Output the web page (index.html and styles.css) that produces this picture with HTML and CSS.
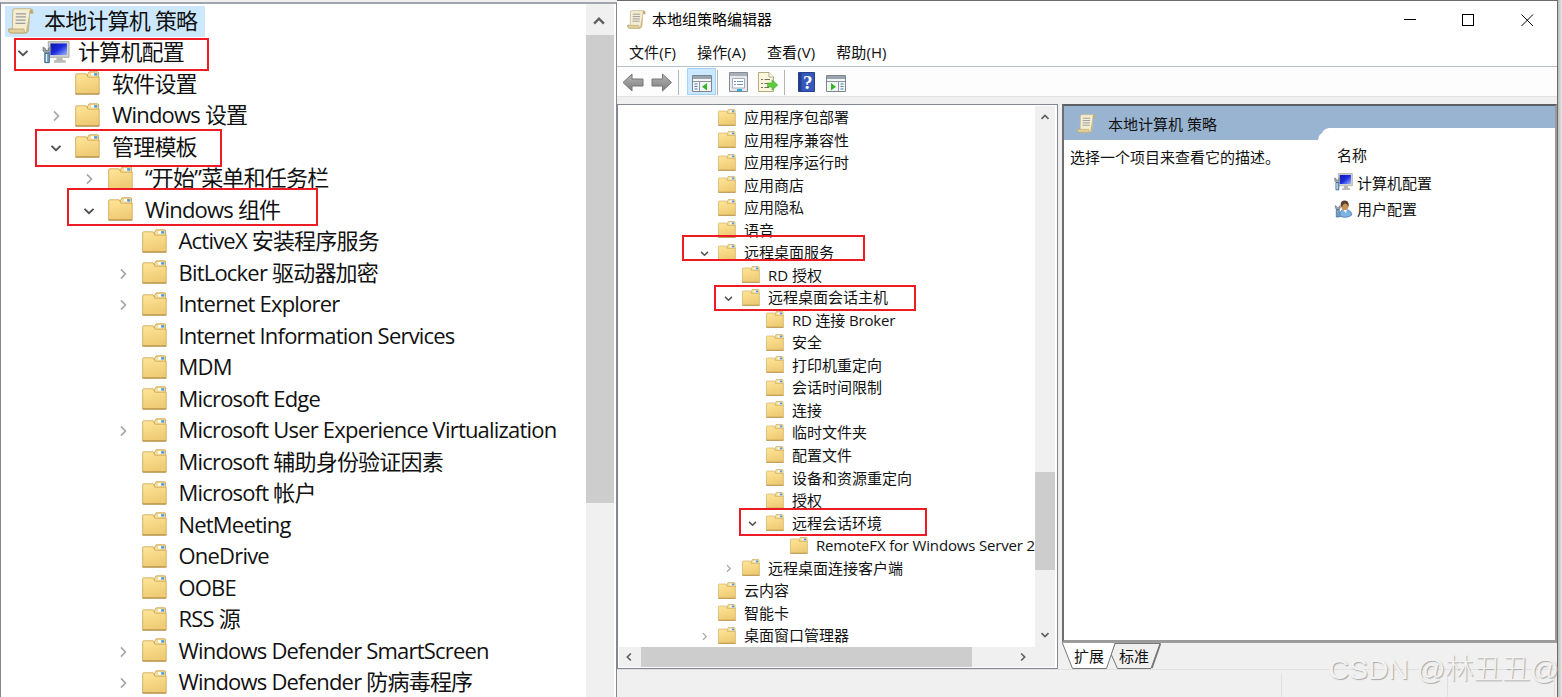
FILE: index.html
```
<!DOCTYPE html>
<html lang="zh-CN">

<head>
    <meta charset="UTF-8">
    <meta name="viewport" content="width=device-width, initial-scale=1.0">
    <title>本地组策略编辑器</title>
    <link rel="stylesheet" href="styles.css">
</head>

<body>
    <svg class="defs" width="0" height="0">
        <defs>
            <linearGradient id="fold" x1="0" y1="0" x2="0.3" y2="1">
                <stop offset="0" stop-color="#ffe69a" />
                <stop offset="1" stop-color="#efcb74" />
            </linearGradient>
            <linearGradient id="blue" x1="0" y1="0" x2="1" y2="1">
                <stop offset="0" stop-color="#0a14a8" />
                <stop offset="0.5" stop-color="#1c2be0" />
                <stop offset="1" stop-color="#9db8ff" />
            </linearGradient>
            <linearGradient id="grey" x1="0" y1="0" x2="0" y2="1">
                <stop offset="0" stop-color="#b5b5b5" />
                <stop offset="1" stop-color="#7e7e7e" />
            </linearGradient>
        </defs>
        <symbol id="folder" viewBox="0 0 18 17" preserveAspectRatio="none">
            <path d="M9 2.5 L10.2 .6 H16.4 Q17 .6 17 1.3 V6 H9z" fill="#f6dc94" stroke="#c9a658" stroke-width=".7" />
            <path d="M.5 2.7 Q.5 2 1.2 2 H8 L9.3 4.4 H17.4 V16.3 H.5z" fill="url(#fold)" stroke="#d3b064" stroke-width=".7" />
            <path d="M11.6 1.5 h4.4 v1.8 h-4.4z" fill="#fff" />
            <path d="M13.8 1.5 h2.2 v1.8 h-2.2z" fill="#4a9be0" />
            <path d="M.4 16.3 H17.5" stroke="#b6924c" stroke-width=".9" />
        </symbol>
        <symbol id="scroll" viewBox="0 0 18 18">
            <path d="M3.3 1.2 Q4 .6 5 .6 H15.5 Q17.4 .8 17.3 3.6 H15 L14.2 15 Q14 17.2 12 17.3 H2 Q.4 17 .5 14.5 H3z" fill="#f5edcf" stroke="#c4b78f" stroke-width=".7" />
            <path d="M14.8 3.5 Q14.6 1.6 15.7 .8 Q17.5 1 17.3 3.6z" fill="#bda871" />
            <path d="M15 3.6 L14.2 15 Q14 17 12.4 17.3 L13 13z" fill="#c9b988" />
            <path d="M.5 14.6 H11 Q11 16.6 12.4 17.3 H2 Q.5 17 .5 14.6z" fill="#e3d19a" stroke="#b8a572" stroke-width=".6" />
            <path d="M5.5 4 H12.5 M5.4 6.2 H12.4 M5.3 8.4 H12.2 M5.2 10.6 H12" stroke="#9b9ba4" stroke-width=".9" />
        </symbol>
        <symbol id="computer" viewBox="0 0 20 17" preserveAspectRatio="none">
            <path d="M4.5 .5 H19.3 V12 H4.5z" fill="#d5d5cf" stroke="#a5a5a0" stroke-width=".7" />
            <path d="M6 1.8 H17.8 V10.4 H6z" fill="url(#blue)" />
            <path d="M10.5 12 H14.5 L15 14.3 H17 V16 H8.5 V14.3 H10.2z" fill="#b9b9b5" />
            <path d="M.8 4.5 V7.4 L2.4 9 H4.6 L6.2 7.4 V4.5 L4.6 5.6 V7 H2.4 V5.6z" fill="#a2a8ae" stroke="#666f78" stroke-width=".6" />
            <path d="M2 9 H5.2 V16 H2z" fill="#77a5cf" stroke="#39617f" stroke-width=".7" />
            <path d="M3.2 9.6 V15.4" stroke="#e8f4ff" stroke-width=".8" />
        </symbol>
        <symbol id="user" viewBox="0 0 18 18">
            <path d="M5.5 16.5 Q5 9.5 10 9.3 Q16.6 9.5 17.3 15 Q15 17.4 10 17.3z" fill="#7db4e2" stroke="#3c6d9d" stroke-width=".7" />
            <path d="M8.6 9.5 L11 13 L13 9.6z" fill="#f2f7fb" />
            <ellipse cx="10.3" cy="5.6" rx="3.7" ry="4.5" fill="#c88f57" />
            <path d="M6.3 6 Q5.5 .6 10.5 .6 Q15 1 14 7 Q13.4 4 11 3.4 Q8 3.6 7.8 7z" fill="#58402c" />
            <path d="M.8 5.5 V8 L2.2 9.5 H4.4 L5.8 8 V5.5 L4.4 6.5 V7.8 H2.2 V6.5z" fill="#a2a8ae" stroke="#666f78" stroke-width=".6" />
            <path d="M1.8 9.5 H4.8 V17 H1.8z" fill="#77a5cf" stroke="#39617f" stroke-width=".7" />
        </symbol>
        <symbol id="open" viewBox="0 0 10 10">
            <path d="M1.2 3.2 L5 6.9 L8.8 3.2" fill="none" stroke="#505050" stroke-width="1.6" />
        </symbol>
        <symbol id="closed" viewBox="0 0 10 10">
            <path d="M3.3 1.2 L7 5 L3.3 8.8" fill="none" stroke="#a6a6a6" stroke-width="1.4" />
        </symbol>
        <symbol id="chev" viewBox="0 0 12 12">
            <path d="M1.8 8.2 L6 4 L10.2 8.2" fill="none" stroke="#606060" stroke-width="2" />
        </symbol>
    </svg>

    <div class="container">
        <div class="left">
            <ul class="tree big">
                <li class="root"><span class="selected"><svg class="icon"><use href="#scroll" /></svg>本地计算机 策略</span></li>
                <li class="l1"><svg class="arrow"><use href="#open" /></svg><svg class="icon pc"><use href="#computer" /></svg>计算机配置</li>
                <li class="l2"><svg class="arrow"></svg><svg class="icon"><use href="#folder" /></svg>软件设置</li>
                <li class="l2"><svg class="arrow"><use href="#closed" /></svg><svg class="icon"><use href="#folder" /></svg>Windows 设置</li>
                <li class="l2"><svg class="arrow"><use href="#open" /></svg><svg class="icon"><use href="#folder" /></svg>管理模板</li>
                <li class="l3"><svg class="arrow"><use href="#closed" /></svg><svg class="icon"><use href="#folder" /></svg>“开始”菜单和任务栏</li>
                <li class="l3"><svg class="arrow"><use href="#open" /></svg><svg class="icon"><use href="#folder" /></svg>Windows 组件</li>
                <li class="l4"><svg class="arrow"></svg><svg class="icon"><use href="#folder" /></svg>ActiveX 安装程序服务</li>
                <li class="l4"><svg class="arrow"><use href="#closed" /></svg><svg class="icon"><use href="#folder" /></svg>BitLocker 驱动器加密</li>
                <li class="l4"><svg class="arrow"><use href="#closed" /></svg><svg class="icon"><use href="#folder" /></svg>Internet Explorer</li>
                <li class="l4"><svg class="arrow"></svg><svg class="icon"><use href="#folder" /></svg>Internet Information Services</li>
                <li class="l4"><svg class="arrow"></svg><svg class="icon"><use href="#folder" /></svg>MDM</li>
                <li class="l4"><svg class="arrow"></svg><svg class="icon"><use href="#folder" /></svg>Microsoft Edge</li>
                <li class="l4"><svg class="arrow"><use href="#closed" /></svg><svg class="icon"><use href="#folder" /></svg>Microsoft User Experience Virtualization</li>
                <li class="l4"><svg class="arrow"></svg><svg class="icon"><use href="#folder" /></svg>Microsoft 辅助身份验证因素</li>
                <li class="l4"><svg class="arrow"></svg><svg class="icon"><use href="#folder" /></svg>Microsoft 帐户</li>
                <li class="l4"><svg class="arrow"></svg><svg class="icon"><use href="#folder" /></svg>NetMeeting</li>
                <li class="l4"><svg class="arrow"></svg><svg class="icon"><use href="#folder" /></svg>OneDrive</li>
                <li class="l4"><svg class="arrow"></svg><svg class="icon"><use href="#folder" /></svg>OOBE</li>
                <li class="l4"><svg class="arrow"></svg><svg class="icon"><use href="#folder" /></svg>RSS 源</li>
                <li class="l4"><svg class="arrow"><use href="#closed" /></svg><svg class="icon"><use href="#folder" /></svg>Windows Defender SmartScreen</li>
                <li class="l4"><svg class="arrow"><use href="#closed" /></svg><svg class="icon"><use href="#folder" /></svg>Windows Defender 防病毒程序</li>
            </ul>
            <div class="bar-big">
                <svg class="chev"><use href="#chev" /></svg>
                <div class="thumb"></div>
            </div>
            <div class="mark m1"></div>
            <div class="mark m2"></div>
            <div class="mark m3"></div>
        </div>

        <div class="window">
            <div class="titlebar">
                <svg class="icon"><use href="#scroll" /></svg>
                <span class="caption">本地组策略编辑器</span>
                <svg class="buttons" width="131" height="14" viewBox="0 0 131 14" shape-rendering="crispEdges">
                    <path d="M0 6.5 H12 M58.5 1.5 H69.5 V12.5 H58.5z" fill="none" stroke="#000" />
                    <path d="M117.5 1.5 L129 13 M129 1.5 L117.5 13" stroke="#000" shape-rendering="auto" />
                </svg>
            </div>
            <div class="menu">
                <span>文件(F)</span>
                <span>操作(A)</span>
                <span>查看(V)</span>
                <span>帮助(H)</span>
            </div>
            <div class="toolbar">
                <svg width="240" height="28" viewBox="0 0 240 28">
                    <path d="M6 14.5 L15 6 V11 H26 V18 H15 V23z" fill="url(#grey)" stroke="#777" />
                    <path d="M54.5 14.5 L45.5 6 V11 H35 V18 H45.5 V23z" fill="url(#grey)" stroke="#777" />
                    <path d="M61.5 2 V27 M100.5 2 V27 M167.5 2 V27" stroke="#b4b4b4" />
                    <path d="M70.5 .5 H98.5 V26.5 H70.5z" fill="#cce8ff" stroke="#a4d2f5" />
                    <!-- console tree -->
                    <path d="M75.5 7.5 H94.5 V23.5 H75.5z" fill="#f4f5f6" stroke="#7d8690" />
                    <path d="M76 8 H94 V11 H76z" fill="#9aa4ae" />
                    <path d="M76 13.5 H94 M82.5 14 V23" stroke="#8b949e" />
                    <path d="M77.5 16 H80.5 M77.5 18.5 H80.5 M77.5 21 H80.5" stroke="#4d7eb0" stroke-width="1.2" />
                    <path d="M90 15 V22.500 L85 18.700z" fill="#35b525" />
                    <!-- properties -->
                    <path d="M112.5 4.5 H130.5 V23.5 H112.5z" fill="#e6e9ec" stroke="#858b92" />
                    <path d="M113 5 H130 V8 H113z" fill="#aab0b7" />
                    <path d="M115.5 10.5 H127.5 V20 H115.5z" fill="#fff" stroke="#a6adb6" />
                    <path d="M117 13.5 H119 M120 13.5 H126 M117 16.5 H119 M120 16.5 H126" stroke="#6e93b9" />
                    <path d="M120 22 H125" stroke="#22aaf0" stroke-width="2" />
                    <!-- export list -->
                    <path d="M141.5 4.5 H152 L156.5 9 V23.5 H141.5z" fill="#fcf6dc" stroke="#b7ab82" />
                    <path d="M152 4.5 V9 H156.5" fill="#fff" stroke="#b7ab82" />
                    <path d="M144 11.5 H146 M147.5 11.5 H153 M144 15.5 H146 M147.5 15.5 H152 M144 19.5 H146 M147.5 19.5 H152" stroke="#70706a" />
                    <path d="M150.5 15 H155 V11.8 L160.8 17 L155 22.2 V19 H150.5z" fill="#5ccb3d" stroke="#48a82e" stroke-width=".6" />
                    <!-- help -->
                    <path d="M181.500 4.500 H197.500 V23.500 H181.500z" fill="#3658bd" stroke="#27408a" />
                    <path d="M182 5 H184.500 V23 H182z" fill="#233c94" />
                    <text x="186" y="20.5" class="question">?</text>
                    <!-- action pane -->
                    <path d="M209.5 7.5 H228.5 V23.5 H209.5z" fill="#f4f5f6" stroke="#7d8690" />
                    <path d="M210 8 H228 V11 H210z" fill="#9aa4ae" />
                    <path d="M210 13.5 H228 M221.5 14 V23" stroke="#8b949e" />
                    <path d="M223.5 16 H226.5 M223.5 18.5 H226.5 M223.5 21 H226.5" stroke="#4d7eb0" stroke-width="1.2" />
                    <path d="M214 15 V22.5 L219 18.7z" fill="#35b525" />
                </svg>
            </div>
            <div class="content">
                <div class="console">
                    <div class="console-top">
                        <ul class="tree small">
                            <li class="l1"><svg class="arrow"></svg><svg class="icon"><use href="#folder" /></svg>应用程序包部署</li>
                            <li class="l1"><svg class="arrow"></svg><svg class="icon"><use href="#folder" /></svg>应用程序兼容性</li>
                            <li class="l1"><svg class="arrow"></svg><svg class="icon"><use href="#folder" /></svg>应用程序运行时</li>
                            <li class="l1"><svg class="arrow"></svg><svg class="icon"><use href="#folder" /></svg>应用商店</li>
                            <li class="l1"><svg class="arrow"></svg><svg class="icon"><use href="#folder" /></svg>应用隐私</li>
                            <li class="l1"><svg class="arrow"></svg><svg class="icon"><use href="#folder" /></svg>语音</li>
                            <li class="l1"><svg class="arrow"><use href="#open" /></svg><svg class="icon"><use href="#folder" /></svg>远程桌面服务</li>
                            <li class="l2"><svg class="arrow"></svg><svg class="icon"><use href="#folder" /></svg>RD 授权</li>
                            <li class="l2"><svg class="arrow"><use href="#open" /></svg><svg class="icon"><use href="#folder" /></svg>远程桌面会话主机</li>
                            <li class="l3"><svg class="arrow"></svg><svg class="icon"><use href="#folder" /></svg><span class="latin">RD 连接 Broker</span></li>
                            <li class="l3"><svg class="arrow"></svg><svg class="icon"><use href="#folder" /></svg>安全</li>
                            <li class="l3"><svg class="arrow"></svg><svg class="icon"><use href="#folder" /></svg>打印机重定向</li>
                            <li class="l3"><svg class="arrow"></svg><svg class="icon"><use href="#folder" /></svg>会话时间限制</li>
                            <li class="l3"><svg class="arrow"></svg><svg class="icon"><use href="#folder" /></svg>连接</li>
                            <li class="l3"><svg class="arrow"></svg><svg class="icon"><use href="#folder" /></svg>临时文件夹</li>
                            <li class="l3"><svg class="arrow"></svg><svg class="icon"><use href="#folder" /></svg>配置文件</li>
                            <li class="l3"><svg class="arrow"></svg><svg class="icon"><use href="#folder" /></svg>设备和资源重定向</li>
                            <li class="l3"><svg class="arrow"></svg><svg class="icon"><use href="#folder" /></svg>授权</li>
                            <li class="l3"><svg class="arrow"><use href="#open" /></svg><svg class="icon"><use href="#folder" /></svg>远程会话环境</li>
                            <li class="l4"><svg class="arrow"></svg><svg class="icon"><use href="#folder" /></svg><span class="latin">RemoteFX for Windows Server 2</span></li>
                            <li class="l2"><svg class="arrow"><use href="#closed" /></svg><svg class="icon"><use href="#folder" /></svg>远程桌面连接客户端</li>
                            <li class="l1"><svg class="arrow"></svg><svg class="icon"><use href="#folder" /></svg>云内容</li>
                            <li class="l1"><svg class="arrow"></svg><svg class="icon"><use href="#folder" /></svg>智能卡</li>
                            <li class="l1"><svg class="arrow"><use href="#closed" /></svg><svg class="icon"><use href="#folder" /></svg>桌面窗口管理器</li>
                        </ul>
                        <div class="bar-v">
                            <svg class="chev"><use href="#chev" /></svg>
                            <div class="thumb"></div>
                            <svg class="chev down"><use href="#chev" /></svg>
                        </div>
                    </div>
                    <div class="bar-h">
                        <svg class="chev prev"><use href="#chev" /></svg>
                        <div class="thumb"></div>
                        <svg class="chev next"><use href="#chev" /></svg>
                    </div>
                </div>

                <div class="result">
                    <div class="pane">
                        <div class="pane-head">
                            <svg class="icon"><use href="#scroll" /></svg>
                            <span>本地计算机 策略</span>
                            <svg class="curve" width="237" height="12" viewBox="0 0 237 12">
                                <path d="M0 12 Q.5 7 4 5 Q5.5 1 11 0 H237 V12z" fill="#fff" />
                            </svg>
                        </div>
                        <div class="pane-body">
                            <div class="desc">选择一个项目来查看它的描述。</div>
                            <div class="items">
                                <div class="name">名称</div>
                                <div class="item"><svg><use href="#computer" /></svg>计算机配置</div>
                                <div class="item"><svg><use href="#user" /></svg>用户配置</div>
                            </div>
                        </div>
                    </div>
                    <div class="tabs">
                        <svg class="tabshape" width="100" height="27" viewBox="0 0 100 27">
                            <path d="M53 .5 L49 11 L55.5 25.5 H89 L98 .5z" fill="#f0f0f0" stroke="#777" />
                            <path d="M90 25 L98.5 .5" stroke="#777" stroke-width="1.5" />
                            <path d="M0 -1 L10.5 25.5 H44.5 L53.5 -1z" fill="#fff" stroke="#777" />
                        </svg>
                        <span class="tab">扩展</span>
                        <span class="tab">标准</span>
                    </div>
                </div>
            </div>
            <div class="status">
                <div class="cell c1"></div>
                <div class="cell c2"></div>
                <div class="cell c3"></div>
            </div>
            <div class="mark m4"></div>
            <div class="mark m5"></div>
            <div class="mark m6"></div>
        </div>
        <div class="shadow"></div>
        <div class="watermark">CSDN @林丑丑@</div>
    </div>
</body>

</html>
```

FILE: styles.css
```
* {
    box-sizing: border-box;
}

body {
    margin: 0;
    overflow: hidden;
    color: #111;
    font-family: "Open Sans", "Noto Sans CJK SC", sans-serif;
    font-size: 15px;
}

svg {
    display: block;
    flex: none;
}

.defs {
    position: absolute;
}

.container {
    position: relative;
    display: flex;
    width: 1562px;
    height: 697px;
    overflow: hidden;
    background-color: #f0f0f0;
}

/* left tree */
.left {
    position: relative;
    display: flex;
    width: 617px;
    height: 695px;
    margin-top: 2px;
    border: 1px solid #828790;
    border-width: 2px 1px 0 1px;
    border-top-color: #a0a5ad;
    background-color: white;
}

.tree {
    list-style: none;
    margin: 0;
    padding: 0;
    flex: 1;
    white-space: nowrap;
}

.tree li {
    display: flex;
    align-items: center;
}

.big {
    padding-top: 2px;
    font-size: 22px;
    line-height: 26px;
    letter-spacing: -0.8px;
}

.big li {
    height: 31.5px;
    padding-bottom: 4px;
}

.big .arrow {
    width: 12px;
    height: 12px;
    margin-top: 4px;
    margin-right: 13px;
}

.big .icon {
    width: 25px;
    height: 24px;
    margin-right: 12px;
    margin-top: 1px;
}

.big .pc {
    width: 28px;
    height: 23px;
    margin-top: 3px;
    margin-right: 8px;
}

.big .root {
    padding-bottom: 0;
}

.big .root .icon {
    width: 26px;
    height: 26px;
    margin: 3px 10px 0 3px;
}

.selected {
    display: flex;
    align-items: center;
    width: 200px;
    height: 31px;
    margin-left: 4px;
    padding-bottom: 4px;
    background-color: #cce8ff;
}

.big .l1 {
    padding-left: 16px;
}

.big .l2 {
    padding-left: 49px;
}

.big .l3 {
    padding-left: 82px;
}

.big .l4 {
    padding-left: 115.5px;
}

.bar-big {
    width: 30px;
    border-right: 2px solid white;
    background-color: #f0f0f0;
}

.bar-big .chev {
    width: 14px;
    height: 14px;
    margin: 10px 0 7px 6px;
}

.bar-big .thumb {
    height: 468px;
    background-color: #cdcdcd;
}

/* editor window */
.window {
    position: relative;
    display: flex;
    flex-direction: column;
    width: 941px;
    border-top: 1px solid #6a6a6a;
    border-right: 1px solid #6a6a6a;
    background-color: #f0f0f0;
}

.titlebar {
    display: flex;
    align-items: center;
    height: 37px;
    padding: 0 22px 0 10px;
    background-color: white;
}

.titlebar .icon {
    width: 19px;
    height: 19px;
    margin-right: 6px;
}

.caption {
    flex: 1;
    padding-bottom: 2px;
    color: black;
}

.menu {
    display: flex;
    gap: 21px;
    height: 29px;
    padding: 2px 0 0 12px;
    line-height: 24px;
    letter-spacing: 0.1px;
    background-color: white;
    border-bottom: 1px solid #b9c1c8;
}

.toolbar {
    height: 30px;
    padding-top: 1px;
    background-color: #fdfdfd;
    border-bottom: 1px solid #e3e3e3;
}

.question {
    fill: white;
    font-family: "Liberation Serif", serif;
    font-size: 19px;
    font-weight: bold;
}

.content {
    display: flex;
    gap: 4px;
    height: 572px;
    padding-top: 7px;
}

.console {
    width: 441px;
    height: 565px;
    padding: 1px;
    border: 1px solid #828790;
    background-color: white;
}

.console-top {
    display: flex;
    height: 541px;
}

.small {
    font-size: 15px;
    line-height: 20px;
    padding-top: 1px;
}

.small li {
    height: 22.53px;
    padding-bottom: 2px;
}

.small .arrow {
    width: 9px;
    height: 9px;
    margin-top: 2px;
    margin-right: 9px;
}

.small .icon {
    width: 18px;
    height: 17px;
    margin-right: 8px;
}

.small .l1 {
    padding-left: 81px;
}

.small .l2 {
    padding-left: 105px;
}

.small .l3 {
    padding-left: 129px;
}

.small .l4 {
    padding-left: 153px;
}

.latin {
    letter-spacing: -0.17px;
}

.bar-v {
    display: flex;
    flex-direction: column;
    width: 20px;
    margin-right: 1px;
    background-color: #f0f0f0;
}

.chev {
    width: 10px;
    height: 10px;
}

.bar-v .chev {
    margin: 6px 0 0 5px;
}

.bar-v .thumb {
    height: 98px;
    margin-top: 350px;
    background-color: #cdcdcd;
}

.bar-v .down {
    margin-top: 60px;
    transform: rotate(180deg);
}

.bar-h {
    display: flex;
    align-items: center;
    height: 20px;
    margin-right: 1px;
    background-color: #f0f0f0;
}

.bar-h .thumb {
    width: 331px;
    height: 20px;
    margin: 0 46px 0 7px;
    background-color: #cdcdcd;
}

.prev {
    margin-left: 5px;
    transform: rotate(-90deg);
}

.next {
    transform: rotate(90deg);
}

.result {
    flex: 1;
}

.pane {
    height: 538px;
    border: 2px solid #8c8c8c;
    border-style: double solid solid solid;
    border-color: #5c5f63 #9a9a9a #9a9a9a #6f6f6f;
    background-color: white;
}

.pane-head {
    display: flex;
    align-items: center;
    height: 34px;
    padding-left: 13px;
    background-color: #99b4d1;
}

.pane-head .icon {
    width: 19px;
    height: 19px;
    margin-right: 12px;
}

.pane-head span {
    flex: 1;
}

.curve {
    align-self: flex-end;
}

.pane-body {
    display: flex;
}

.desc {
    width: 270px;
    padding: 6px 0 0 6px;
    line-height: 22px;
}

.name {
    padding: 4px 0 3px 3px;
    line-height: 22px;
}

.item {
    display: flex;
    align-items: center;
    height: 26.5px;
}

.item svg {
    width: 19px;
    height: 18px;
    margin-right: 4px;
}

.tabs {
    position: relative;
    display: flex;
    gap: 15px;
    height: 27px;
    padding-left: 12px;
    line-height: 26px;
    border-top: 1px solid #a0a0a0;
}

.tabshape {
    position: absolute;
    left: 0;
    top: 0;
}

.tab {
    position: relative;
}

.status {
    display: flex;
    flex: 1;
    padding-top: 3px;
    border-top: 1px solid #e0e0e0;
}

.cell {
    border-right: 1px solid #e0e0e0;
}

.c1 {
    width: 665px;
}

.c2 {
    width: 166px;
}

.c3 {
    width: 107px;
}

.shadow {
    width: 4px;
    background: linear-gradient(to right, #bdbdbd, #e6e6e6);
}

/* red highlight boxes over the trees */
.mark {
    position: absolute;
    border: 2px solid #ed1c24;
}

.m1 {
    left: 13px;
    top: 34px;
    width: 195px;
    height: 33px;
}

.m2 {
    left: 34px;
    top: 125px;
    width: 187px;
    height: 38px;
}

.m3 {
    left: 66px;
    top: 184px;
    width: 251px;
    height: 38px;
}

.m4 {
    left: 65px;
    top: 234px;
    width: 183px;
    height: 26px;
}

.m5 {
    left: 97px;
    top: 284px;
    width: 202px;
    height: 26px;
}

.m6 {
    left: 122px;
    top: 507px;
    width: 188px;
    height: 28px;
}

.watermark {
    position: absolute;
    right: 3px;
    bottom: 8px;
    color: #f2f2f2;
    font-family: "Liberation Sans", "Noto Sans CJK SC", sans-serif;
    font-size: 28.3px;
    font-weight: 300;
    line-height: 40px;
    text-shadow: 1px 1px 1px #a8a8a8;
}
```
